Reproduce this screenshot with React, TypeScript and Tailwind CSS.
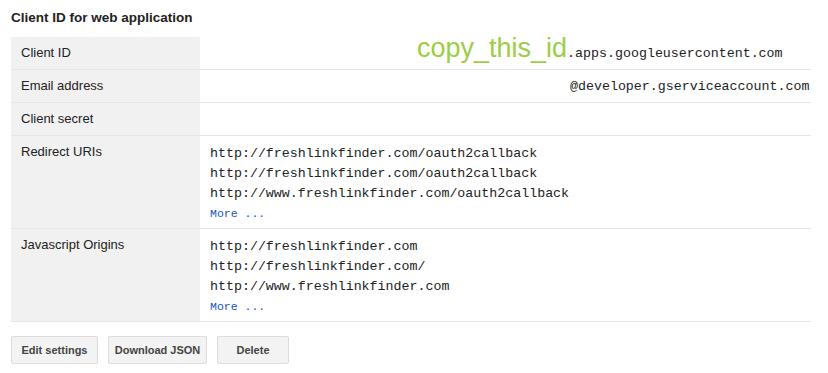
import React from 'react';

const sans = { fontFamily: '"Liberation Sans", Arial, sans-serif' };

interface Row {
  label: string;
  lines?: string[];
  more?: boolean;
  custom?: React.ReactNode;
}

const rows: Row[] = [
  {
    label: 'Client ID',
    custom: (
      <div className="pl-[217px] pt-[7px] leading-[20px] whitespace-nowrap">
        <span className="font-['Liberation_Sans',Arial,sans-serif] text-[27px] leading-[0px] text-[#9ccd48]">copy_this_id</span>
        <span>.apps.googleusercontent.com</span>
      </div>
    ),
  },
  {
    label: 'Email address',
    custom: (
      <div className="pl-[370px] pt-[7px] leading-[20px] whitespace-nowrap">@developer.gserviceaccount.com</div>
    ),
  },
  { label: 'Client secret', lines: [] },
  {
    label: 'Redirect URIs',
    lines: [
      'http://freshlinkfinder.com/oauth2callback',
      'http://freshlinkfinder.com/oauth2callback',
      'http://www.freshlinkfinder.com/oauth2callback',
    ],
    more: true,
  },
  {
    label: 'Javascript Origins',
    lines: ['http://freshlinkfinder.com', 'http://freshlinkfinder.com/', 'http://www.freshlinkfinder.com'],
    more: true,
  },
];

export default function App() {
  return (
    <div className="w-[828px] h-[373px] bg-white px-[11px] text-[#222]" style={sans}>
      {/* Header */}
      <div className="pt-[10px] mb-[11px] h-[16px] box-content text-[13.5px] font-bold leading-[16px]">
        Client ID for web application
      </div>

      {/* Details table */}
      <div className="w-[800px]">
        {rows.map((row) => (
          <div key={row.label} className="flex border-b border-[#e5e5e5]">
            <div className="w-[189px] shrink-0 bg-[#f1f1f1] px-[10px] pt-[6px] pb-[6px] text-[13px] leading-[20px]">
              {row.label}
            </div>
            <div className="flex-1 font-['Liberation_Mono','Courier_New',monospace] text-[13.3px] text-[#222]">
              {row.custom ?? (
                <div className="pl-[10px] pt-[8px] pb-[4px] leading-[20px]">
                  {row.lines!.map((l, i) => (
                    <div key={i}>{l}</div>
                  ))}
                  {row.more && <div className="text-[11.5px] text-[#1155cc]">More ...</div>}
                </div>
              )}
            </div>
          </div>
        ))}
      </div>

      {/* Actions */}
      <div className="flex gap-[10px] mt-[14px]">
        {[
          ['Edit settings', 'w-[87px]'],
          ['Download JSON', 'w-[99px]'],
          ['Delete', 'w-[72px]'],
        ].map(([text, w]) => (
          <button
            key={text}
            className={`${w} h-[28px] rounded-[2px] border border-[#dcdcdc] bg-[#f3f3f3] text-[11px] font-bold text-[#444] flex items-center justify-center`}
          >
            {text}
          </button>
        ))}
      </div>
    </div>
  );
}
